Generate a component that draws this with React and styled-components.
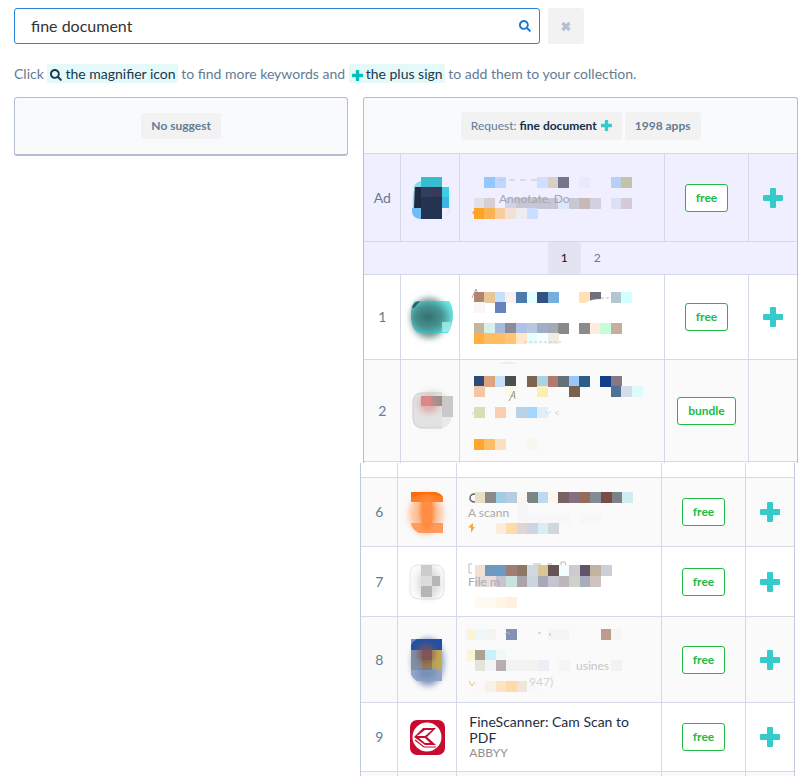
import React from 'react';
import styled, { createGlobalStyle } from 'styled-components';
import { FaSearch } from 'react-icons/fa';

const GlobalStyle = createGlobalStyle`
  * {
    box-sizing: border-box;
  }

  body {
    margin: 0;
    background: #ffffff;
    color: #627c94;
    font-family: Lato, 'Open Sans', sans-serif;
    font-size: 14px;
    line-height: 20px;
  }
`;

const Page = styled.main`
  padding: 8px 12px 0 14px;
`;

const SearchForm = styled.form`
  display: flex;
  gap: 8px;
`;

const SearchField = styled.div`
  display: flex;
  align-items: center;
  flex: 0 1 526px;
  height: 36px;
  padding: 0 8px 0 16px;
  border: 1px solid #2684dc;
  border-radius: 3px;
`;

const SearchInput = styled.input`
  flex: 1;
  min-width: 0;
  padding: 0;
  border: 0;
  outline: 0;
  background: none;
  color: #333333;
  font: inherit;
  font-size: 16px;
`;

const IconButton = styled.button`
  display: flex;
  padding: 0;
  border: 0;
  background: none;
  color: ${({ $color }) => $color};
  cursor: pointer;
`;

const ClearButton = styled(IconButton)`
  align-items: center;
  justify-content: center;
  width: 36px;
  height: 36px;
  border-radius: 3px;
  background: #f2f2f2;
`;

const Hint = styled.p`
  margin: 20px 0 13px;
`;

const Mark = styled.span`
  padding: 1px 2px 1px 3px;
  border-radius: 2px;
  background: #e5f9f8;
  color: #163853;

  svg {
    margin-right: 3px;
    vertical-align: -2px;
  }
`;

const Columns = styled.div`
  display: grid;
  grid-template-columns: 10fr 13fr;
  align-items: start;
  gap: 15px;
`;

const SuggestPanel = styled.section`
  display: flex;
  justify-content: center;
  padding: 15px;
  border: 1px solid #b4bdd2;
  border-bottom-width: 2px;
  border-radius: 3px;
  background: #f9fafc;
`;

const Label = styled.span`
  display: inline-flex;
  align-items: center;
  gap: ${({ $gap }) => $gap || 0}px;
  height: ${({ $tall }) => ($tall ? 28 : 26)}px;
  padding: 0 10px;
  border-radius: 3px;
  background: #f2f2f2;
  color: #627c94;
  font-size: 12px;
  font-weight: ${({ $regular }) => ($regular ? 400 : 700)};

  strong {
    color: #142e47;
  }
`;

const ResultsHeader = styled.header`
  display: flex;
  align-items: center;
  justify-content: center;
  gap: 3px;
  height: 56px;
  border: 1px solid #b4bdd2;
  border-bottom: 0;
  border-radius: 3px 3px 0 0;
  background: #f9fafc;
`;

const Table = styled.table`
  width: 100%;
  border: 1px solid #b4bdd2;
  border-width: 0 1px;
  border-spacing: 0;
  table-layout: fixed;
`;

const MoreTable = styled(Table)`
  margin: 0 0 0 -3px;
  border-color: #c0cade;
`;

const Row = styled.tr`
  height: ${({ $height }) => $height}px;
  background: ${({ $tone }) => $tone || '#ffffff'};
`;

const Cell = styled.td`
  padding: 0;
  border-top: 1px solid #d4d9e8;
  border-left: ${({ $first }) => ($first ? '0' : '1px solid #d4d9e8')};
  text-align: center;
  vertical-align: middle;
`;

const InfoCell = styled(Cell)`
  text-align: left;
`;

const BlankCell = styled(Cell)`
  border-top: 0;
`;

const Drawing = styled.svg`
  display: block;
`;

const Price = styled.a`
  display: inline-block;
  padding: 0 10px;
  border: 1px solid #21ba45;
  border-radius: 3px;
  background: #ffffff;
  color: #21ba45;
  font-size: 12px;
  font-weight: 700;
  line-height: 26px;
  text-decoration: none;
  vertical-align: middle;
`;

const AddButton = styled(IconButton)`
  margin: 0 auto;
`;

const Pager = styled.nav`
  display: flex;
  justify-content: center;
`;

const PageLink = styled.a`
  width: 33px;
  border-radius: 3px;
  background: ${({ $active }) => ($active ? '#e3e3f1' : 'transparent')};
  color: ${({ $active }) => ($active ? '#111111' : '#627c94')};
  font-size: 12px;
  line-height: 32px;
  text-decoration: none;
`;

const AppInfo = styled.div`
  padding: 0 12px;
`;

const AppName = styled.a`
  display: block;
  color: #1c2d3f;
  line-height: 16px;
  text-decoration: none;
`;

const Developer = styled.div`
  color: #909090;
  font-size: 12px;
  line-height: 14px;
`;

const SolidPlus = ({ size, color = 'currentColor' }) => (
  <svg width={size} height={size} viewBox="0 0 20 20" aria-hidden="true">
    <path fill={color} d="M8 0h4q1 0 1 1v6h6q1 0 1 1v4q0 1-1 1h-6v6q0 1-1 1H8q-1 0-1-1v-6H1q-1 0-1-1V8q0-1 1-1h6V1q0-1 1-1z" />
  </svg>
);

const SolidCross = () => (
  <svg width="12" height="12" viewBox="0 0 12 12" aria-hidden="true">
    <path d="m2.5 3 7 7m0-7-7 7" fill="none" stroke="currentColor" strokeWidth="3.2" />
  </svg>
);

// Each tile is [x, y, colour, columns]
const Mosaic = ({ tiles, height, children }) => (
  <Drawing width="204" height={height} aria-hidden="true">
    {tiles.map(([x, y, fill, span = 1]) => (
      <rect key={`${x}-${y}`} x={x} y={y} width={span * 10.5} height="10.5" fill={fill} shapeRendering="crispEdges" />
    ))}
    {children}
  </Drawing>
);

const Soft = ({ id, amount = 3 }) => (
  <filter id={id} x="-40%" y="-40%" width="180%" height="180%">
    <feGaussianBlur stdDeviation={amount} />
  </filter>
);

const AdIcon = () => (
  <Drawing width="58" height="86" aria-hidden="true">
    <defs>
      <linearGradient id="ad-edge">
        <stop offset="0" stopColor="#6fe0f2" stopOpacity=".2" />
        <stop offset=".6" stopColor="#1f2b45" />
      </linearGradient>
    </defs>
    <path d="M12 34q2-7 8-8v6h-5z" fill="#35c9dc" opacity=".55" />
    <path d="M11 53q0-14 3-21h6v21z" fill="url(#ad-edge)" />
    <path d="M14 32h6v21h-7z" fill="#1f2b45" />
    <path d="M20 22h21v10H20z" fill="#36bdd0" />
    <path d="M20 32h21v32H20z" fill="#24334f" />
    <path d="M20 32h11v10H20z" fill="#323e5b" />
    <path d="M31 32h10v10H31z" fill="#353b58" />
    <path d="M41 32h7v10h-7z" fill="#3bcfe7" />
    <path d="M41 42h7v11h-7z" fill="#3fb5e6" />
    <path d="M49 36v18q-1 5-4 7" fill="none" stroke="#c8f0fa" />
    <path d="M11 53h9v11q-8 0-9-7z" fill="#70bcf5" />
  </Drawing>
);

const TealIcon = () => (
  <Drawing width="58" height="84" aria-hidden="true">
    <defs>
      <Soft id="teal-soft" />
      <radialGradient id="teal-fill" cx=".4" cy=".5" r=".65">
        <stop offset="0" stopColor="#246a69" />
        <stop offset=".5" stopColor="#3a8f8d" />
        <stop offset="1" stopColor="#42e3df" />
      </radialGradient>
    </defs>
    <ellipse cx="28" cy="43" rx="18" ry="20" fill="#47706f" opacity=".75" filter="url(#teal-soft)" />
    <path d="M14 26h34q4 5 4 14t-5 18H17Q9 53 10 37q0-7 4-11z" fill="url(#teal-fill)" opacity=".8" />
    <path d="M11 33q1-6 8-7l-6 7z" fill="#2e5c5e" />
    <path d="M41 47h9q-1 8-4 10h-5z" fill="#a7eeec" opacity=".8" />
  </Drawing>
);

const GreyIcon = () => (
  <Drawing width="58" height="101" aria-hidden="true">
    <defs><Soft id="grey-soft" /></defs>
    <ellipse cx="32" cy="49" rx="17" ry="17" fill="#aaa" opacity=".4" filter="url(#grey-soft)" />
    <path d="M41 33H21q-9 0-9 9v16q0 10 10 10h19" fill="#e2e2e2" stroke="#cfcfcf" />
    <path d="M41 57h10q-2 10-10 11z" fill="#e9e9e9" />
    <path d="M20 36h10v10H20z" fill="#d98686" />
    <path d="M30 36h11v10H30z" fill="#948f8f" />
    <path d="M41 36h11v21H41z" fill="#c9c9c9" />
    <ellipse cx="28" cy="44" rx="10" ry="9" fill="#dc8989" opacity=".6" filter="url(#grey-soft)" />
  </Drawing>
);

const OrangeIcon = () => (
  <Drawing width="58" height="68" aria-hidden="true">
    <defs>
      <Soft id="orange-soft" />
      <Soft id="orange-core" amount={2} />
    </defs>
    <ellipse cx="28" cy="36" rx="17" ry="20" fill="#ffae7c" opacity=".75" filter="url(#orange-soft)" />
    <path d="M13 14h24q5 1 8 5v5H13z" fill="#ff7d26" />
    <path d="M13 20V14h24q5 1 8 5-15-6-32 1z" fill="#ff6b08" />
    <path d="M13 45h32v10H21q-7-3-8-10z" fill="#ff9b5c" />
    <ellipse cx="29" cy="34" rx="7" ry="18" fill="#ff8738" filter="url(#orange-core)" />
    <path d="M24 24h10v21H24z" fill="#ff8d43" />
  </Drawing>
);

const PaleIcon = () => (
  <Drawing width="58" height="69" aria-hidden="true">
    <defs><Soft id="pale-soft" /></defs>
    <rect x="12" y="18" width="34" height="34" rx="8" fill="#fbfbfb" stroke="#e5e5e5" />
    <ellipse cx="31" cy="36" rx="12" ry="16" fill="#bbb" opacity=".45" filter="url(#pale-soft)" />
    <path d="M23 18h11v11H23z" fill="#cccccc" />
    <path d="M23 29h11v10H23z" fill="#dcdcdc" />
    <path d="M34 29h8v10h-8z" fill="#b6b6b6" />
    <path d="M23 39h11v11H23z" fill="#b5b5b5" />
  </Drawing>
);

const BlueIcon = () => (
  <Drawing width="58" height="85" aria-hidden="true">
    <defs><Soft id="blue-soft" /></defs>
    <ellipse cx="30" cy="45" rx="16" ry="24" fill="#5976a9" opacity=".7" filter="url(#blue-soft)" />
    <path d="M13 22h31v11H13z" fill="#2450a2" />
    <path d="M13 28v-6h6q-4 2-6 6z" fill="#6f8fc8" />
    <path d="M13 33h11v20H13z" fill="#8190a4" />
    <path d="M24 33h10v10H24z" fill="#92504d" />
    <path d="M34 33h10v20H34z" fill="#c3aa55" />
    <path d="M24 43h10v10H24z" fill="#a47b42" />
    <path d="M13 53h31v11H19q-5-3-6-7z" fill="#93a6c9" />
    <ellipse cx="28" cy="37" rx="9" ry="10" fill="#7c565a" opacity=".8" filter="url(#blue-soft)" />
    <ellipse cx="29" cy="56" rx="10" ry="7" fill="#647fae" opacity=".6" filter="url(#blue-soft)" />
  </Drawing>
);

const ScannerIcon = () => (
  <Drawing width="58" height="68" aria-hidden="true">
    <rect x="12" y="17" width="35" height="35" rx="7" fill="#c60c30" />
    <circle cx="29" cy="34" r="14.5" fill="#fff" />
    <path d="M25 25h13l-9 9 9 8H27L16 34z" fill="#c60c30" />
    <path d="M27 27h7l-7 6h-8z" fill="#fff" />
    <path d="m21 35 6 5h5l-5-5z" fill="#fff" />
    <path d="m17 37 9 7h12" fill="none" stroke="#c60c30" strokeWidth="1.2" />
  </Drawing>
);

const AdInfo = () => (
  <Mosaic height={86} tiles={[
    [24, 22, '#92c8ff'], [35, 22, '#c0d5ff'], [77, 22, '#d0dfff'], [88, 22, '#d9cec8'], [98, 22, '#74778b'],
    [119, 22, '#e6eaff'], [151, 22, '#bad0f2'], [161, 22, '#c4c2ac'], [14, 43, '#e4e0ea'], [24, 43, '#d8ced4'],
    [45, 43, '#ced5e7'], [56, 43, '#c5c7d3', 4], [98, 43, '#dce8fb'], [109, 43, '#c8c7d4'], [119, 43, '#c7b9b5'],
    [130, 43, '#d4d0df'], [151, 43, '#dddff5'], [161, 43, '#d5cad7'], [14, 53, '#ffa326'], [24, 53, '#fbb351'],
    [35, 53, '#f7cd9e'], [45, 53, '#f3e0d7'], [56, 53, '#efebf3'], [67, 53, '#ccdeff'],
  ]}>
    <path d="M38 25h40" stroke="#c2c4d3" strokeDasharray="6 5" />
    <text x="39" y="48" fontSize="12" fill="#a4a6b1">Annotate, Do</text>
    <path d="M14 53v3l-2 1 2 3v3" fill="#ffa326" />
  </Mosaic>
);

const FirstInfo = () => (
  <Mosaic height={84} tiles={[
    [14, 17, '#b1856d'], [24, 17, '#e6c79a'], [35, 17, '#c6e0fa'], [45, 17, '#fbf0f0'], [56, 17, '#4c7aab'],
    [67, 17, '#e3ffff'], [77, 17, '#35517f'], [88, 17, '#75afdd'], [119, 17, '#ffe1b3'], [130, 17, '#707078'],
    [151, 17, '#afc8d4'], [161, 17, '#d4ffff'], [14, 27, '#fbf6f4'], [35, 27, '#6583bd'],
    [14, 48, '#c6b49d'], [24, 48, '#d6f0eb'], [35, 48, '#a7badd'], [45, 48, '#8c8c98'], [56, 48, '#adc2e5'],
    [67, 48, '#b8c9df'], [77, 48, '#a0aec7'], [88, 48, '#a1aab5'], [98, 48, '#898989'], [119, 48, '#8b8b8b'],
    [130, 48, '#ffecdc'], [140, 48, '#c5ffd9'], [151, 48, '#c7ad9d'], [14, 58, '#ffae40'], [24, 58, '#ffbd63', 2],
    [45, 58, '#ffc573'], [56, 58, '#ffe7c8'], [67, 58, '#e5ffff'], [77, 58, '#f6ffff'], [88, 58, '#f0ebe3'],
  ]}>
    <path d="m12 23 4-9 1 3" fill="none" stroke="#aaa" />
    <path d="M126 28q4-4 15-4v4z" fill="#fff" />
    <path d="M141 23h20" stroke="#bbb" strokeDasharray="3 2" />
    <path d="M64 67h37" stroke="#ccc" strokeDasharray="3 2" />
  </Mosaic>
);

const SecondInfo = () => (
  <Mosaic height={101} tiles={[
    [14, 16, '#2b4c78'], [24, 16, '#dca57d'], [35, 16, '#c6e0fa'], [45, 16, '#485052'], [67, 16, '#7f6251'],
    [77, 16, '#a8d3e2'], [88, 16, '#b17a6e'], [98, 16, '#64717b'], [109, 16, '#98c8fb'], [119, 16, '#2d5e87'],
    [140, 16, '#113f88'], [151, 16, '#857882'], [14, 26, '#f4c6a4'], [45, 26, '#fbf9e9'], [77, 26, '#faefb7'],
    [109, 26, '#7b604d'], [151, 26, '#517096'], [161, 26, '#d4dce9'], [172, 26, '#defbfa'],
    [14, 47, '#dadeb7'], [35, 47, '#facfaf'], [56, 47, '#bad2e6'], [67, 47, '#a3d6fc'], [77, 47, '#e0effa'],
    [14, 79, '#ffa72c'], [24, 79, '#fdbd65'], [35, 79, '#fce1c0'], [67, 79, '#f7f7ef'],
  ]}>
    <path d="M38 4q10-5 20 0z" fill="#eeeef0" />
    <path d="m49 41 5-10 1 8m-4-3h4" fill="none" stroke="#999" />
    <path d="m12 55 4-6M85 51l3 3 3-3m8 0-4 2 4 2" fill="none" stroke="#d8d8d8" />
  </Mosaic>
);

const SixthInfo = () => (
  <Mosaic height={68} tiles={[
    [18, 14, '#e9dfc7'], [28, 14, '#8b8b8b'], [39, 14, '#9fcee2'], [49, 14, '#b6cce0'], [60, 14, '#fbf7f0'],
    [70, 14, '#7b8583'], [81, 14, '#bddaf3'], [91, 14, '#fbf7f0'], [101, 14, '#796061'], [112, 14, '#857080'],
    [123, 14, '#956c5b'], [133, 14, '#818b94'], [144, 14, '#784d46'], [155, 14, '#7b8089'], [165, 14, '#d2edf1'],
    [60, 24, '#f6f6f6'], [60, 35, '#f7f7f9', 5], [123, 35, '#f7f7f7', 2],
    [39, 45, '#fbedda'], [49, 45, '#fddbab'], [60, 45, '#ded5d6'], [70, 45, '#cfd5e0'], [81, 45, '#d8eef3'], [91, 45, '#d0d8dd'],
  ]}>
    <path d="M18 16q-5 0-5 4t5 4" fill="none" stroke="#666" strokeWidth="1.4" />
    <text x="11" y="39" fontSize="12" fill="#aaa">A scann</text>
    <path d="m11 49 5-4v4h2l-4 6v-5z" fill="#f9ae36" />
  </Mosaic>
);

const SeventhInfo = () => (
  <Mosaic height={69} tiles={[
    [18, 18, '#f1e0d4'], [28, 18, '#7097be'], [39, 18, '#6c9ac5'], [49, 18, '#a17c75'], [60, 18, '#8d7863'],
    [70, 18, '#d2d8e2'], [81, 18, '#dac594'], [91, 18, '#655356'], [102, 18, '#f3fcff'], [112, 18, '#cecad0'],
    [123, 18, '#5f5469'], [133, 18, '#c3b2a2'], [144, 18, '#cbd0d6'],
    [18, 29, '#e6dedc', 2], [39, 29, '#c8c3d1'], [49, 29, '#cae1dd'], [60, 29, '#aaa5ad'], [70, 29, '#ccd4de'], [81, 29, '#a7a9b8'],
    [91, 29, '#c6c5cd'], [102, 29, '#bfb6bc'], [112, 29, '#cdd3c9'], [123, 29, '#a7adbb'], [133, 29, '#cfc2bf'],
    [18, 50, '#fff9ef'], [28, 50, '#fffaf2'], [39, 50, '#fff6e7'], [49, 50, '#fff0df'],
  ]}>
    <path d="M15 17h-3v9h3M76 17h8m6 0h5m9 1v-3h4l1 3" fill="none" stroke="#bbb" />
    <text x="11" y="39" fontSize="12" fill="#aaa">File m</text>
  </Mosaic>
);

const EighthInfo = () => (
  <Mosaic height={85} tiles={[
    [10, 12, '#f9f5d6'], [18, 12, '#f0f7fa'], [28, 12, '#f4f4f4'], [49, 12, '#8491b2'], [91, 12, '#f4f5f7', 2], [144, 12, '#bc9c8a'], [154, 12, '#f6f5f4'],
    [10, 33, '#f9f5d6'], [18, 33, '#aba493'], [28, 33, '#c9f1fc'], [39, 33, '#f1f8fa'],
    [18, 43, '#e3e4dc'], [28, 43, '#f4f4f6'], [39, 43, '#b8adb0'], [49, 43, '#f3f2f2'], [60, 43, '#f2f3f5'], [70, 43, '#f3f2ef'], [81, 43, '#eceef4'], [102, 43, '#f5f5f5'], [154, 43, '#f2f2f2'],
    [18, 64, '#fbf8f5'], [28, 64, '#fbf0e6'], [39, 64, '#fde2c4'], [49, 64, '#fddba9'], [60, 64, '#ede6d9'], [70, 64, '#f8f8f8'],
  ]}>
    <path d="M48 17q2-3 5 0m28-1h3m9 0v3" fill="none" stroke="#bbb" />
    <text x="119" y="53" fontSize="12" fill="#c4c5c8">usines</text>
    <text x="72" y="69" fontSize="12" fill="#d4d4d4">947)</text>
    <path d="m12 64 3 5 3-4" fill="none" stroke="#f7bb72" />
  </Mosaic>
);

const topApps = [
  { rank: 'Ad', height: 88, tone: '#efefff', icon: <AdIcon />, info: <AdInfo />, price: 'free', canAdd: true },
  { rank: '1', height: 85, icon: <TealIcon />, info: <FirstInfo />, price: 'free', canAdd: true },
  { rank: '2', height: 102, tone: '#fafafa', icon: <GreyIcon />, info: <SecondInfo />, price: 'bundle' },
];

const moreApps = [
  { rank: '6', height: 69, tone: '#fafafa', icon: <OrangeIcon />, info: <SixthInfo />, price: 'free', canAdd: true },
  { rank: '7', height: 70, icon: <PaleIcon />, info: <SeventhInfo />, price: 'free', canAdd: true },
  { rank: '8', height: 86, tone: '#fafafa', icon: <BlueIcon />, info: <EighthInfo />, price: 'free', canAdd: true },
  {
    rank: '9',
    height: 69,
    icon: <ScannerIcon />,
    info: (
      <AppInfo>
        <AppName href="#finescanner">FineScanner: Cam Scan to PDF</AppName>
        <Developer>ABBYY</Developer>
      </AppInfo>
    ),
    price: 'free',
    canAdd: true,
  },
];

const ColumnWidths = () => (
  <colgroup>
    <col width="36" />
    <col width="59" />
    <col />
    <col width="84" />
    <col width="49" />
  </colgroup>
);

const BlankRow = ({ height, tone, ruled }) => {
  const Part = ruled ? Cell : BlankCell;
  return (
    <Row $height={height} $tone={tone}>
      <Part $first /><Part /><Part /><Part /><Part />
    </Row>
  );
};

const AppRow = ({ app }) => (
  <Row $height={app.height} $tone={app.tone}>
    <Cell $first>{app.rank}</Cell>
    <Cell>{app.icon}</Cell>
    <InfoCell>{app.info}</InfoCell>
    <Cell><Price href="#store">{app.price}</Price></Cell>
    <Cell>
      {app.canAdd && (
        <AddButton type="button" $color="#35cbcb" aria-label="Add to collection">
          <SolidPlus size={20} />
        </AddButton>
      )}
    </Cell>
  </Row>
);

export default function App() {
  const [query, setQuery] = React.useState('fine document');

  return (
    <>
      <GlobalStyle />
      <Page>
        <SearchForm onSubmit={(event) => event.preventDefault()}>
          <SearchField>
            <SearchInput
              aria-label="Search keywords"
              value={query}
              onChange={(event) => setQuery(event.target.value)}
            />
            <IconButton type="submit" $color="#2175cf" aria-label="Search">
              <FaSearch size={12} />
            </IconButton>
          </SearchField>
          <ClearButton type="button" $color="#b4bfd3" aria-label="Clear" onClick={() => setQuery('')}>
            <SolidCross />
          </ClearButton>
        </SearchForm>

        <Hint>
          Click <Mark><FaSearch size={12} />the magnifier icon</Mark> to find more keywords and{' '}
          <Mark><SolidPlus size={11} color="#00bfbf" />the plus sign</Mark> to add them to your collection.
        </Hint>

        <Columns>
          <SuggestPanel>
            <Label>No suggest</Label>
          </SuggestPanel>
          <section>
            <ResultsHeader>
              <Label $tall $regular $gap={4}>
                <span>Request: <strong>fine document</strong></span>
                <IconButton type="button" $color="#35cbcb" aria-label="Add request">
                  <SolidPlus size={11} />
                </IconButton>
              </Label>
              <Label $tall>1998 apps</Label>
            </ResultsHeader>
            <Table>
              <ColumnWidths />
              <tbody>
                <AppRow app={topApps[0]} />
                <Row $height={33} $tone="#efefff">
                  <Cell $first colSpan={5}>
                    <Pager aria-label="Result pages">
                      <PageLink href="#page-1" $active>1</PageLink>
                      <PageLink href="#page-2">2</PageLink>
                    </Pager>
                  </Cell>
                </Row>
                <AppRow app={topApps[1]} />
                <AppRow app={topApps[2]} />
                <BlankRow height={2} ruled />
              </tbody>
            </Table>
            <MoreTable>
              <ColumnWidths />
              <tbody>
                <BlankRow height={14} />
                {moreApps.map((app) => <AppRow key={app.rank} app={app} />)}
                <BlankRow height={5} tone="#fafafa" ruled />
              </tbody>
            </MoreTable>
          </section>
        </Columns>
      </Page>
    </>
  );
}
